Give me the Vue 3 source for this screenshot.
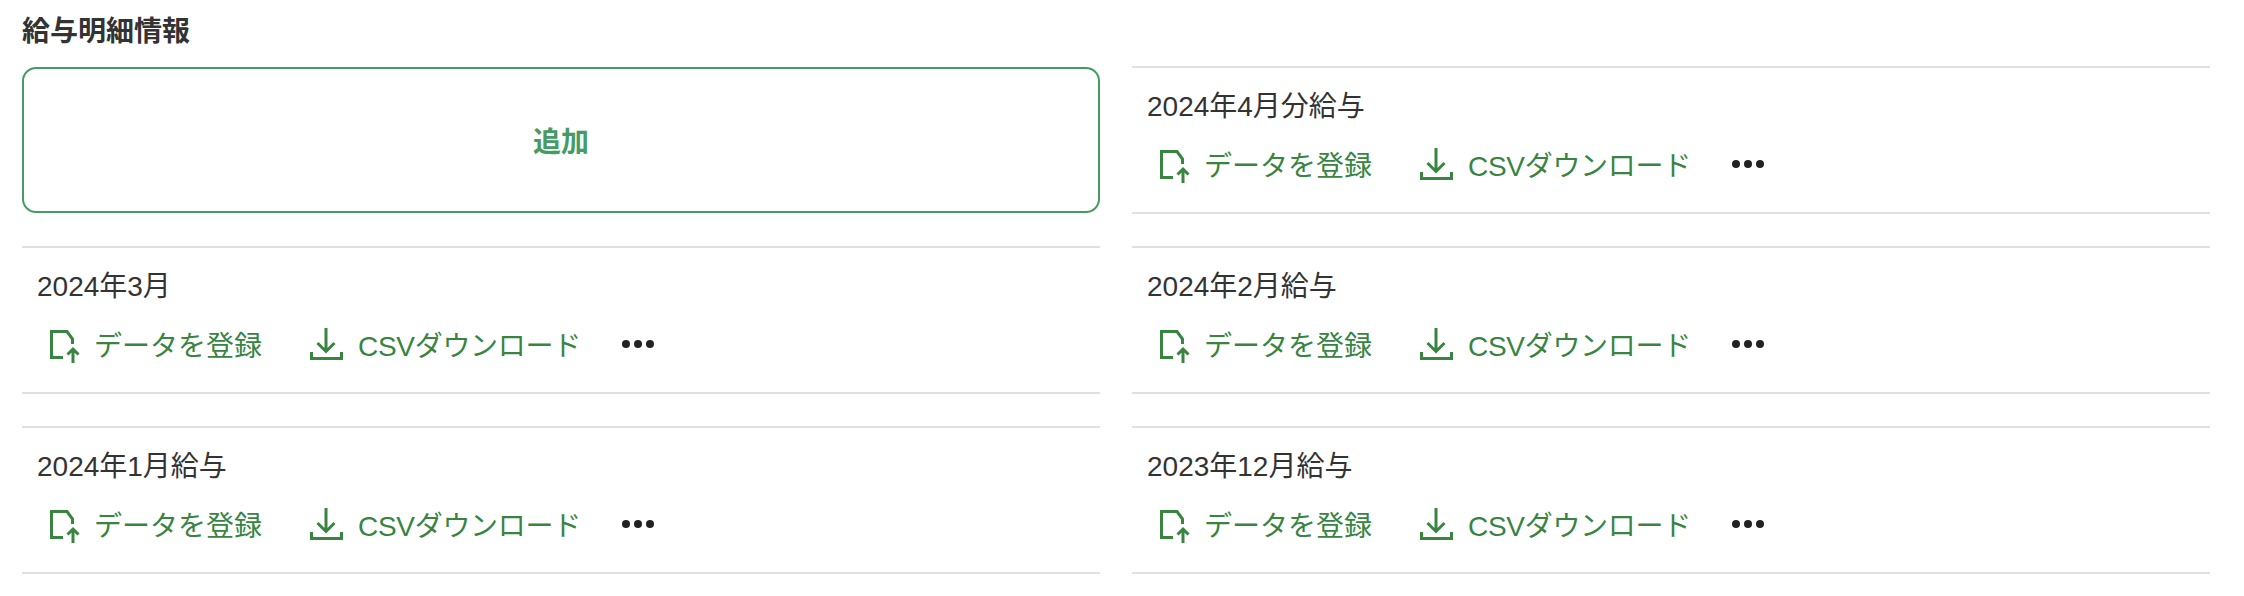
<script setup>
const items = [
  { id: 1, title: "2024年4月分給与" },
  { id: 2, title: "2024年3月" },
  { id: 3, title: "2024年2月給与" },
  { id: 4, title: "2024年1月給与" },
  { id: 5, title: "2023年12月給与" },
];
</script>

<template>
  <div class="page">
    <h2 class="heading">給与明細情報</h2>
    <div class="grid">
      <button class="add-button">追加</button>

      <div v-for="item in items" :key="item.id" class="item">
        <p class="item-title">{{ item.title }}</p>
        <div class="actions">
          <a class="action">
            <svg class="icon" viewBox="0 0 36 36">
              <path d="M17 29.5H5.5V3.5H21L26.5 11V16" />
              <path d="M27 35V21M21.5 26.5L27 21L32.5 26.5" />
            </svg>
            <span>データを登録</span>
          </a>
          <a class="action action-csv">
            <svg class="icon" viewBox="0 0 36 36">
              <path d="M3.5 24V30.5H33.5V24" />
              <path d="M18 0V23M9.5 15L18 23.5L26.5 15" />
            </svg>
            <span>CSVダウンロード</span>
          </a>
          <svg class="dots" viewBox="0 0 32 8">
            <circle cx="4" cy="4" r="4" />
            <circle cx="16" cy="4" r="4" />
            <circle cx="28" cy="4" r="4" />
          </svg>
        </div>
      </div>
    </div>
  </div>
</template>

<style scoped>
.page {
  width: 2244px;
  height: 596px;
  padding: 14px 34px 0 22px;
  box-sizing: border-box;
  background: #fff;
  color: #333;
  font-family: "Liberation Sans", "Noto Sans CJK JP", sans-serif;
  font-size: 28px;
  overflow: hidden;
}

.heading {
  margin: 0 0 16px;
  font-size: 28px;
  line-height: 36px;
  font-weight: 700;
}

.grid {
  display: grid;
  grid-template-columns: 1078px 1078px;
  column-gap: 32px;
  row-gap: 32px;
}

.add-button {
  height: 146px;
  margin-top: 1px;
  box-sizing: border-box;
  border: 2px solid #459b63;
  border-radius: 14px;
  background: #fff;
  color: #459b63;
  font-family: inherit;
  font-size: 28px;
  font-weight: 700;
}

.item {
  height: 148px;
  box-sizing: border-box;
  padding: 19px 0 0 15px;
  border-top: 2px solid #e0e0e0;
  border-bottom: 2px solid #e0e0e0;
}

.item-title {
  margin: 0;
  line-height: 40px;
}

.actions {
  display: flex;
  align-items: center;
  gap: 46px;
  margin-top: 20px;
  padding-left: 9px;
}

.action {
  display: flex;
  align-items: center;
  gap: 12px;
  line-height: 36px;
  color: #388440;
}

.action span {
  padding-top: 2px;
}

.action-csv {
  gap: 14px;
  letter-spacing: -0.3px;
}

.icon {
  width: 36px;
  height: 36px;
  fill: none;
  stroke: #388440;
  stroke-width: 3;
}

.dots {
  width: 32px;
  height: 8px;
  margin: 0 0 4px -5px;
  fill: #222;
}
</style>
